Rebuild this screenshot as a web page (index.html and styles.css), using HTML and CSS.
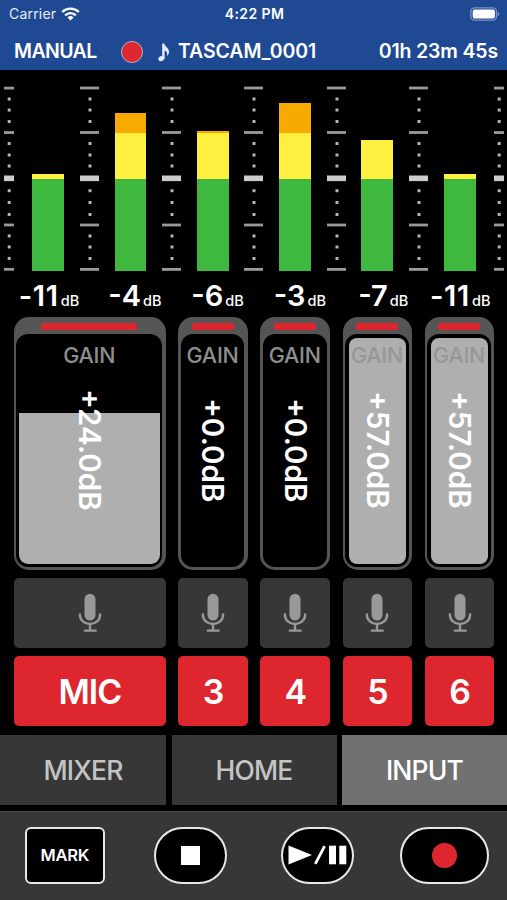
FILE: index.html
```html
<!DOCTYPE html>
<html lang="en">
<head>
<meta charset="UTF-8" />
<meta name="viewport" content="width=device-width, initial-scale=1" />
<title>Recorder Control</title>
<link rel="stylesheet" href="styles.css">
</head>
<body>

<svg class="defs" width="0" height="0">
  <symbol id="ticks" viewBox="0 0 19 186">
    <g fill="#999">
      <rect x="0" y="1.6" width="19" height="2.8" />
      <rect x="0" y="46.1" width="19" height="2.8" />
      <rect x="0" y="138.6" width="19" height="2.8" />
      <rect x="0" y="183" width="19" height="2.8" />
    </g>
    <rect x="0" y="90.5" width="19" height="5.6" fill="#ccc" />
    <g fill="#b4b4b4">
      <rect x="8.5" y="12.5" width="3" height="3" />
      <rect x="8.5" y="23.5" width="3" height="3" />
      <rect x="8.5" y="35" width="3" height="3" />
      <rect x="8.5" y="57" width="3" height="3" />
      <rect x="8.5" y="68.5" width="3" height="3" />
      <rect x="8.5" y="79.5" width="3" height="3" />
      <rect x="8.5" y="104.2" width="3" height="3" />
      <rect x="8.5" y="116" width="3" height="3" />
      <rect x="8.5" y="128" width="3" height="3" />
      <rect x="8.5" y="149.5" width="3" height="3" />
      <rect x="8.5" y="160.5" width="3" height="3" />
      <rect x="8.5" y="172" width="3" height="3" />
    </g>
  </symbol>
  <symbol id="mic" viewBox="0 0 24 40">
    <rect x="6.5" y="0.8" width="11" height="26.7" rx="5.5" fill="#999" />
    <path d="M1.9 21.5v.5a10.1 9 0 0 0 20.2 0v-.5M12 31.5v6M6.8 37.6h10.9" fill="none" stroke="#999" stroke-width="2.4" stroke-linecap="round" />
  </symbol>
</svg>

<div id="app">
  <header class="header">
    <div class="status">
      <div class="carrier">
        <span>Carrier</span>
        <svg class="wifi" width="19" height="14" viewBox="0 0 19 14">
          <g fill="none" stroke="#fff" stroke-width="2.4">
            <path d="M1.2 5a11.8 11.8 0 0 1 16.6 0" />
            <path d="M4.2 8.3a7.5 7.5 0 0 1 10.6 0" />
          </g>
          <path d="M6.5 10.4a4.3 4.3 0 0 1 6 0L9.5 13.5z" fill="#fff" />
        </svg>
      </div>
      <div class="clock">4:22 PM</div>
      <svg class="battery" width="30" height="14" viewBox="0 0 30 14">
        <rect x="0.9" y="0.8" width="25.6" height="12.4" rx="3.6" fill="none" stroke="#7d94c4" stroke-width="1.3" />
        <rect x="2.7" y="2.6" width="22.2" height="8.9" rx="1.8" fill="#fff" />
        <path d="M27.7 4.7c2 .6 2 4 0 4.6z" fill="#7d94c4" />
      </svg>
    </div>
    <div class="titlebar">
      <span class="mode">MANUAL</span>
      <span class="rec-dot"></span>
      <svg class="note" width="12" height="19" viewBox="0 0 12 19">
        <ellipse cx="3.3" cy="15.6" rx="3" ry="2.5" fill="#e4eefb" transform="rotate(-20 3.3 15.6)" />
        <path d="M4.2 0.5h2c.5 3.2 5 4.4 4.8 8.4-.1 1.7-.8 3-1.9 4 .5-3-.5-4.600-2.500-5.400V15.800H4.200z" fill="#e4eefb" />
      </svg>
      <span class="file">TASCAM_0001</span>
      <span class="elapsed">01h 23m 45s</span>
    </div>
  </header>

  <section class="meters">
    <svg class="scale edge" viewBox="4.8 0 9.4 186"><use href="#ticks" width="19" height="186" /></svg>
    <div class="bar"><i class="yellow" style="height: 4.5px"></i><i class="green"></i></div>
    <svg class="scale" viewBox="0 0 19 186"><use href="#ticks" width="19" height="186" /></svg>
    <div class="bar"><i class="orange" style="height: 20px"></i><i class="yellow" style="height: 46px"></i><i class="green"></i></div>
    <svg class="scale" viewBox="0 0 19 186"><use href="#ticks" width="19" height="186" /></svg>
    <div class="bar"><i class="orange" style="height: 1.2px"></i><i class="yellow" style="height: 46px"></i><i class="green"></i></div>
    <svg class="scale" viewBox="0 0 19 186"><use href="#ticks" width="19" height="186" /></svg>
    <div class="bar"><i class="orange" style="height: 29.5px"></i><i class="yellow" style="height: 46px"></i><i class="green"></i></div>
    <svg class="scale" viewBox="0 0 19 186"><use href="#ticks" width="19" height="186" /></svg>
    <div class="bar"><i class="yellow" style="height: 38.5px"></i><i class="green"></i></div>
    <svg class="scale" viewBox="0 0 19 186"><use href="#ticks" width="19" height="186" /></svg>
    <div class="bar"><i class="yellow" style="height: 4.5px"></i><i class="green"></i></div>
    <svg class="scale edge" viewBox="4.8 0 9.4 186"><use href="#ticks" width="19" height="186" /></svg>
  </section>

  <section class="levels">
    <div class="level wide">-11<small>dB</small></div>
    <div class="level">-4<small>dB</small></div>
    <div class="level">-6<small>dB</small></div>
    <div class="level">-3<small>dB</small></div>
    <div class="level">-7<small>dB</small></div>
    <div class="level wide">-11<small>dB</small></div>
  </section>

  <section class="channels">
    <div class="gain">
      <div class="led"></div>
      <div class="track">
        <div class="fill" style="height: 151px"></div>
        <div class="gain-label">GAIN</div>
        <div class="gain-value">+24.0dB</div>
      </div>
    </div>
    <div class="gain">
      <div class="led"></div>
      <div class="track">
        <div class="gain-label">GAIN</div>
        <div class="gain-value">+0.0dB</div>
      </div>
    </div>
    <div class="gain">
      <div class="led"></div>
      <div class="track">
        <div class="gain-label">GAIN</div>
        <div class="gain-value">+0.0dB</div>
      </div>
    </div>
    <div class="gain full">
      <div class="led"></div>
      <div class="track">
        <div class="fill" style="height: 226px"></div>
        <div class="gain-label">GAIN</div>
        <div class="gain-value">+57.0dB</div>
      </div>
    </div>
    <div class="gain full">
      <div class="led"></div>
      <div class="track">
        <div class="fill" style="height: 226px"></div>
        <div class="gain-label">GAIN</div>
        <div class="gain-value">+57.0dB</div>
      </div>
    </div>

    <div class="source"><svg width="24" height="40"><use href="#mic" /></svg></div>
    <div class="source"><svg width="24" height="40"><use href="#mic" /></svg></div>
    <div class="source"><svg width="24" height="40"><use href="#mic" /></svg></div>
    <div class="source"><svg width="24" height="40"><use href="#mic" /></svg></div>
    <div class="source"><svg width="24" height="40"><use href="#mic" /></svg></div>

    <div class="arm">MIC</div>
    <div class="arm">3</div>
    <div class="arm">4</div>
    <div class="arm">5</div>
    <div class="arm">6</div>
  </section>

  <nav class="tabs">
    <div class="tab">MIXER</div>
    <div class="tab">HOME</div>
    <div class="tab active">INPUT</div>
  </nav>

  <footer class="transport">
    <div class="btn mark">MARK</div>
    <div class="btn stop"><span class="square"></span></div>
    <div class="btn play">
      <svg width="60" height="20" viewBox="0 0 60 20">
        <path d="M1.5 0.5L25 10L1.5 19.5z" fill="#fff" />
        <path d="M28.3 18.8L37.6 1.2" stroke="#fff" stroke-width="2.8" />
        <rect x="42" y="0.7" width="7" height="18.6" fill="#fff" />
        <rect x="52.3" y="0.7" width="7" height="18.6" fill="#fff" />
      </svg>
    </div>
    <div class="btn record"><span class="dot"></span></div>
  </footer>
</div>

</body>
</html>
```
FILE: styles.css
```css
:root {
  --blue: #204993;
  --red: #de262e;
  --panel: #373737;
  --font-family: Inter, "Liberation Sans", sans-serif;
}

html, body {
  margin: 0;
  height: 100%;
  background: #000;
  color: #fff;
  font-family: var(--font-family);
  overflow: hidden;
}

.defs {
  display: block;
}

#app {
  width: 507px;
  height: 900px;
  display: flex;
  flex-direction: column;
  box-sizing: border-box;
}

/* Header */
.header {
  height: 70px;
  background: var(--blue);
}

.status {
  height: 27px;
  padding: 0 7px 0 9px;
  display: grid;
  grid-template-columns: 1fr auto 1fr;
  align-items: center;
  font-size: 14px;
}

.carrier {
  display: flex;
  align-items: center;
  gap: 5px;
  color: #e6ecf7;
  letter-spacing: 0.2px;
}

.clock {
  font-weight: 600;
  letter-spacing: 0.4px;
}

.battery {
  justify-self: end;
}

.titlebar {
  height: 43px;
  padding: 7px 9px 0 14px;
  display: flex;
  align-items: center;
  box-sizing: border-box;
  font-size: 19.5px;
  font-weight: 600;
  line-height: 1;
}

.mode {
  width: 107px;
  letter-spacing: -0.6px;
}

.rec-dot {
  width: 20px;
  height: 20px;
  border: 1.5px solid #b9a9c4;
  border-radius: 50%;
  background: var(--red);
}

.note {
  margin: 0 8px 0 15px;
}

.file {
  letter-spacing: -0.1px;
}

.elapsed {
  margin-left: auto;
  letter-spacing: -0.15px;
}

/* Level meters */
.meters {
  height: 185.5px;
  padding: 15px 3.3px 0 4.3px;
  display: flex;
  justify-content: space-between;
  align-items: flex-end;
}

.scale {
  width: 19px;
  height: 186px;
  flex: none;
}

.scale.edge {
  width: 9.4px;
  margin-right: 3px;
}

.scale.edge:last-child {
  margin: 0 0 0 3px;
}

.bar {
  width: 31.8px;
  display: flex;
  flex-direction: column;
}

.green {
  height: 92px;
  background: #3fb83f;
}

.yellow {
  background: #fff040;
}

.orange {
  background: #f9aa00;
}

.levels {
  height: 46.5px;
  padding-right: 16.5px;
  display: grid;
  grid-template-columns: repeat(6, 82.25px);
  justify-content: end;
  text-align: right;
}

.level {
  font-size: 29px;
  font-weight: 600;
  line-height: 50px;
  white-space: nowrap;
}

.level.wide {
  letter-spacing: 0.7px;
}

.level small {
  margin-left: 2px;
  font-size: 14.5px;
  font-weight: 500;
  letter-spacing: 0;
}

/* Channel strips */
.channels {
  padding: 0 12.5px 0 13.9px;
  display: grid;
  grid-template-columns: 151.8px repeat(4, 69.6px);
  grid-template-rows: 252.9px 69.6px 69.6px;
  column-gap: 12.6px;
  row-gap: 8.5px;
}

.gain {
  display: flex;
  flex-direction: column;
  padding: 6px 3.5px 3.3px 2.5px;
  border-radius: 15px;
  background: #555;
}

.led {
  width: 66%;
  height: 6.7px;
  margin: 0 auto 4px;
  border-radius: 2.5px;
  background: var(--red);
}

.track {
  position: relative;
  flex: 1;
  display: flex;
  align-items: center;
  justify-content: center;
  border-radius: 12px;
  background: #000;
}

.fill {
  position: absolute;
  left: 2.5px;
  right: 2.5px;
  bottom: 3px;
  border-radius: 0 0 9px 9px;
  background: #afafaf;
}

.full .fill {
  left: 3.5px;
  right: 2.5px;
  border-radius: 8px;
}

.gain-label {
  position: absolute;
  top: 9px;
  left: 0;
  right: 0;
  text-align: center;
  font-size: 21.5px;
  font-weight: 500;
  line-height: 24px;
  letter-spacing: -0.2px;
  color: #8e8e8e;
}

.full .gain-label {
  color: #979797;
}

.gain-value {
  position: relative;
  writing-mode: vertical-rl;
  font-size: 29.5px;
  font-weight: 600;
  line-height: 1;
}

.source, .arm {
  display: flex;
  align-items: center;
  justify-content: center;
  border-radius: 5px;
  background: var(--panel);
}

.arm {
  background: var(--red);
  font-size: 34px;
  font-weight: 600;
  letter-spacing: -1px;
}

/* Tabs */
.tabs {
  height: 69.5px;
  margin-top: 9px;
  display: grid;
  grid-template-columns: 166px 165px 165px;
  gap: 5.5px;
}

.tab {
  display: flex;
  align-items: center;
  justify-content: center;
  background: var(--panel);
  color: #c4c4c4;
  font-size: 26.5px;
  font-weight: 500;
  letter-spacing: -0.8px;
}

.tab.active {
  background: #717171;
  color: #fff;
}

/* Transport */
.transport {
  flex: 1;
  margin-top: 6px;
  padding: 15px 18.5px 0 25px;
  display: flex;
  align-items: flex-start;
  border-top: 1px solid #444;
  background: var(--panel);
}

.btn {
  height: 57.5px;
  display: flex;
  align-items: center;
  justify-content: center;
  box-sizing: border-box;
  border: 2px solid #e8e8e8;
  border-radius: 29px;
  background: #000;
}

.mark {
  width: 79.7px;
  margin-right: 49.5px;
  border-radius: 6px;
  font-size: 16.5px;
  font-weight: 600;
  letter-spacing: -0.2px;
}

.stop, .play {
  width: 73px;
}

.play {
  margin-left: 53.5px;
}

.record {
  width: 88.5px;
  margin-left: auto;
}

.square {
  width: 19.5px;
  height: 19px;
  background: #fff;
}

.dot {
  width: 24.5px;
  height: 24.5px;
  border-radius: 50%;
  background: var(--red);
}
```
